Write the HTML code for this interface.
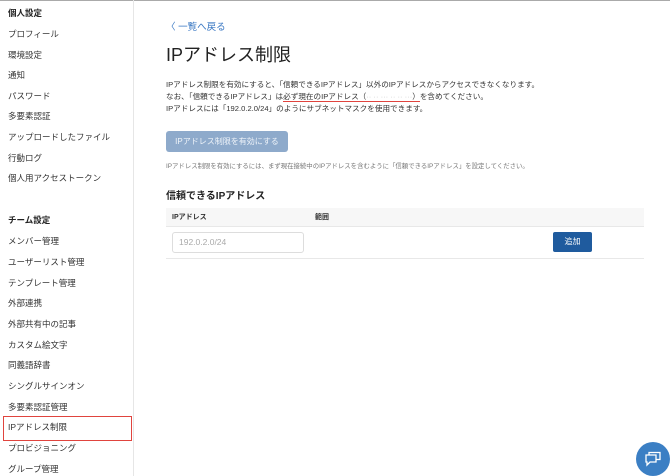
<!DOCTYPE html><html><head><meta charset="utf-8"><style>
body{margin:0;width:670px;height:476px;overflow:hidden;background:#fff;font-family:"Liberation Sans","Noto Sans CJK JP",sans-serif;color:#333;position:relative}
.top{position:absolute;left:0;top:0;width:670px;height:1px;background:#aaa}
.side{position:absolute;left:0;top:0;width:133px;height:476px;border-right:1px solid #e6e6e6}
.side div{position:absolute;left:8px;font-size:8.5px;line-height:12px;color:#333;white-space:nowrap}
.side .h{font-weight:bold;color:#222}
.sel{position:absolute;left:3px;top:416px;width:127px;height:23px;border:1px solid #e0443e}
.m{position:absolute;white-space:nowrap}
</style></head><body>
<div class="top"></div>
<div class="side">
<div class="h" style="top:7px">個人設定</div>
<div style="top:28px">プロフィール</div>
<div style="top:49px">環境設定</div>
<div style="top:69px">通知</div>
<div style="top:90px">パスワード</div>
<div style="top:110px">多要素認証</div>
<div style="top:131px">アップロードしたファイル</div>
<div style="top:152px">行動ログ</div>
<div style="top:172px">個人用アクセストークン</div>
<div class="h" style="top:214px">チーム設定</div>
<div style="top:235px">メンバー管理</div>
<div style="top:256px">ユーザーリスト管理</div>
<div style="top:277px">テンプレート管理</div>
<div style="top:297px">外部連携</div>
<div style="top:318px">外部共有中の記事</div>
<div style="top:339px">カスタム絵文字</div>
<div style="top:359px">同義語辞書</div>
<div style="top:380px">シングルサインオン</div>
<div style="top:401px">多要素認証管理</div>
<div style="top:421px">IPアドレス制限</div>
<div style="top:442px">プロビジョニング</div>
<div style="top:463px">グループ管理</div>
</div>
<div class="sel"></div>
<div class="m" style="left:166px;top:19px;font-size:9.5px;color:#3a78c3">〈 一覧へ戻る</div>
<div class="m" style="left:166px;top:41px;font-size:18px;color:#222">IPアドレス制限</div>
<div class="m" style="left:166px;top:79px;font-size:7.6px;line-height:12px;color:#333">IPアドレス制限を有効にすると、「信頼できるIPアドレス」以外のIPアドレスからアクセスできなくなります。<br>なお、「信頼できるIPアドレス」は<span style="border-bottom:1px solid #e0443e">必ず現在のIPアドレス（<span style="color:#ccc">·· ·· ··· ·· ·· ···</span>）</span>を含めてください。<br>IPアドレスには「192.0.2.0/24」のようにサブネットマスクを使用できます。</div>
<div class="m" style="left:166px;top:131px;width:122px;height:21px;background:#8eaacb;border-radius:3px;color:#eef3f9;font-size:8px;line-height:21px;text-align:center">IPアドレス制限を有効にする</div>
<div class="m" style="left:166px;top:161px;font-size:6.4px;color:#777">IPアドレス制限を有効にするには、まず現在接続中のIPアドレスを含むように「信頼できるIPアドレス」を設定してください。</div>
<div class="m" style="left:166px;top:187px;font-size:10px;font-weight:bold;color:#222">信頼できるIPアドレス</div>
<div class="m" style="left:166px;top:208px;width:478px;height:18px;background:#f7f7f7;border-bottom:1px solid #e8e8e8"></div>
<div class="m" style="left:172px;top:212px;font-size:7px;font-weight:bold;color:#333">IPアドレス</div>
<div class="m" style="left:315px;top:212px;font-size:7px;font-weight:bold;color:#333">範囲</div>
<div class="m" style="left:172px;top:232px;border:1px solid #ddd;border-radius:3px;font-size:8.5px;line-height:19px;color:#aaa;padding-left:6px;box-sizing:border-box;width:132px;height:21px">192.0.2.0/24</div>
<div class="m" style="left:553px;top:232px;width:39px;height:20px;background:#1f5b9e;border-radius:2px;color:#fff;font-size:8px;line-height:20px;text-align:center">追加</div>
<div class="m" style="left:166px;top:258px;width:478px;height:1px;background:#e8e8e8"></div>
<div class="m" style="left:636px;top:442px;width:34px;height:34px;border-radius:50%;background:#3b7fc4"></div>
<svg class="m" style="left:643px;top:449px" width="20" height="20" viewBox="0 0 20 20" fill="none" stroke="#fff" stroke-width="1.3"><path d="M3 6h10v7H7l-3 3v-3H3z"/><path d="M6 6V3.5h11v7h-4"/></svg>
</body></html>
